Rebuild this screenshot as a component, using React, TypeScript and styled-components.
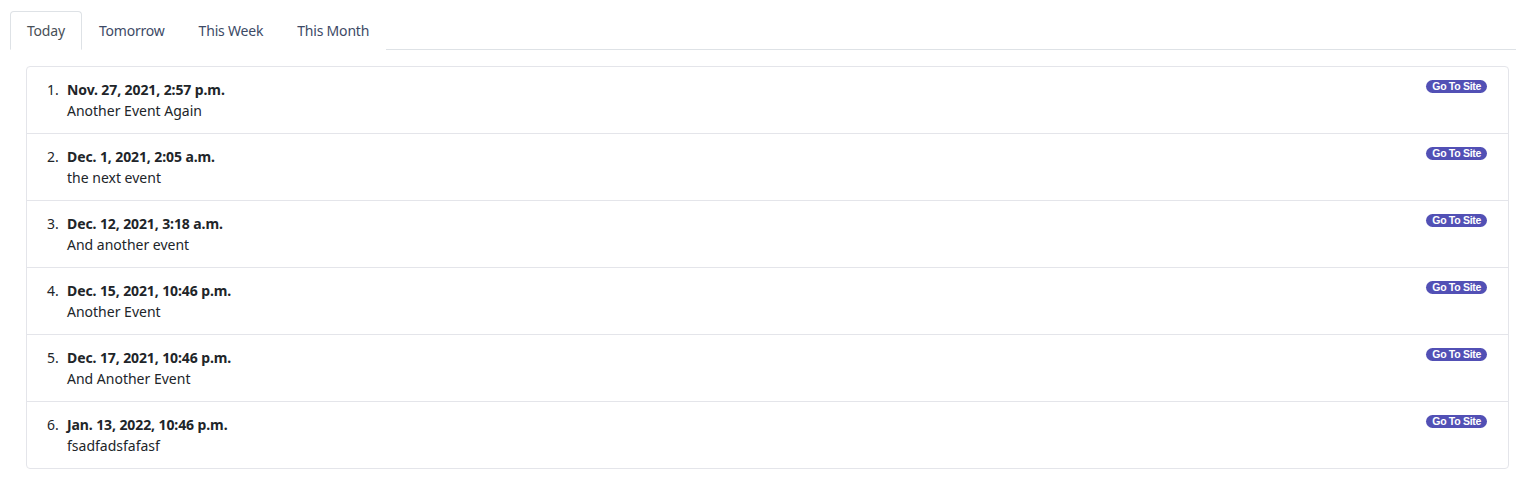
import styled, { createGlobalStyle } from "styled-components";
import { useState } from "react";

interface EventItem {
    when: string;
    title: string;
}

const events: EventItem[] = [
    { when: "Nov. 27, 2021, 2:57 p.m.", title: "Another Event Again" },
    { when: "Dec. 1, 2021, 2:05 a.m.", title: "the next event" },
    { when: "Dec. 12, 2021, 3:18 a.m.", title: "And another event" },
    { when: "Dec. 15, 2021, 10:46 p.m.", title: "Another Event" },
    { when: "Dec. 17, 2021, 10:46 p.m.", title: "And Another Event" },
    { when: "Jan. 13, 2022, 10:46 p.m.", title: "fsadfadsfafasf" },
];

const tabs = ["Today", "Tomorrow", "This Week", "This Month"];

const GlobalStyle = createGlobalStyle`
    body {
        margin: 0;
        background: #fff;
        font-family: "Noto Sans", "Open Sans", sans-serif;
        font-size: 14px;
        color: #212529;
    }
`
const Page = styled.div`
    padding: 11px 0 0 10px;
`
const TabBar = styled.ul`
    display: flex;
    list-style: none;
    margin: 0;
    padding: 0;
    border-bottom: 1px solid #dee2e6;
`
const Tab = styled.li<{$active?: boolean}>`
    padding: 8px 16px;
    line-height: 21px;
    letter-spacing: -0.2px;
    margin-bottom: -1px;
    border: 1px solid ${props => props.$active ? "#dee2e6" : "transparent"};
    border-bottom-color: ${props => props.$active ? "#fff" : "transparent"};
    border-radius: 4px 4px 0 0;
    background: #fff;
    color: ${props => props.$active ? "#495057" : "#3d4a66"};
    cursor: pointer;
`
const List = styled.ol`
    list-style: none;
    margin: 16px 7px 0 16px;
    padding: 0;
    border: 1px solid #e4e5ea;
    border-radius: 4px;
`
const Row = styled.li`
    display: flex;
    align-items: flex-start;
    padding: 12px 21px 12px 20px;
    line-height: 21px;
    & + & {
        border-top: 1px solid #e4e5ea;
    }
`
const Num = styled.span`
    width: 20px;
    flex-shrink: 0;
    color: #212529;
`
const Body = styled.div`
    flex: 1;
`
const When = styled.div`
    font-weight: 700;
    letter-spacing: -0.1px;
`
const Title = styled.div`
    color: #212529;
`
const Badge = styled.a`
    margin-top: 1px;
    display: inline-block;
    background: #5250b5;
    color: #fff;
    font-family: "Liberation Sans", Arial, sans-serif;
    font-weight: 700;
    font-size: 10.5px;
    letter-spacing: -0.3px;
    line-height: 13px;
    padding: 0 6px;
    border-radius: 7px;
    text-decoration: none;
`

export default function App() {
    const [active, setActive] = useState<string>("Today");
    return (
        <Page>
            <GlobalStyle />
            <TabBar>
                {tabs.map((t) => (
                    <Tab key={t} $active={t === active} onClick={() => setActive(t)}>{t}</Tab>
                ))}
            </TabBar>
            <List>
                {events.map((ev, i) => (
                    <Row key={ev.title}>
                        <Num>{i + 1}.</Num>
                        <Body>
                            <When>{ev.when}</When>
                            <Title>{ev.title}</Title>
                        </Body>
                        <Badge href="#">Go To Site</Badge>
                    </Row>
                ))}
            </List>
        </Page>
    );
}
